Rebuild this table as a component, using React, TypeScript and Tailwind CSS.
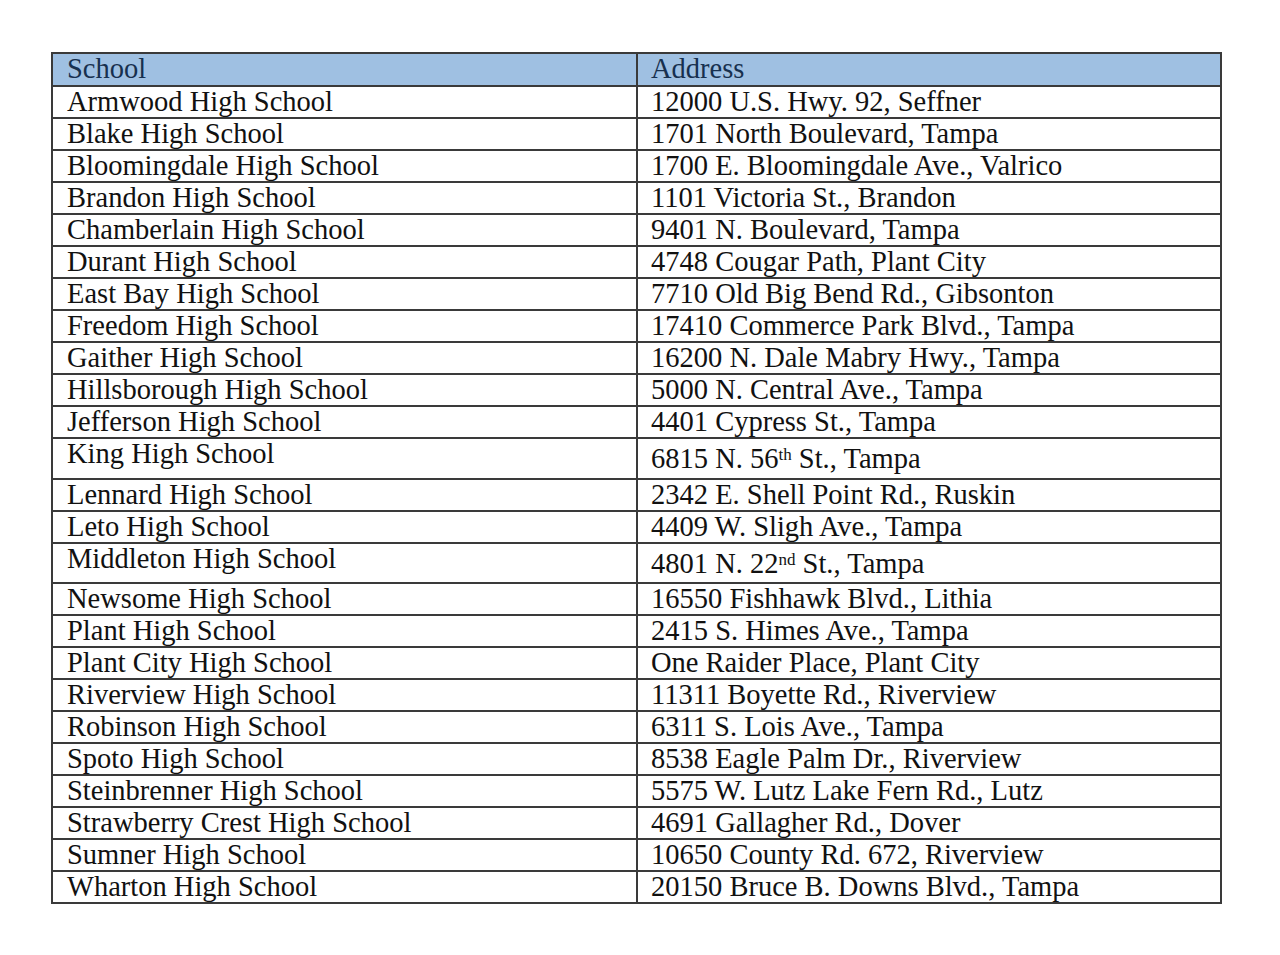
import React from 'react';

type Row = {
  school: string;
  address: React.ReactNode;
  tall?: string; // row height override for lines with superscripts
};

const rows: Row[] = [
  { school: 'Armwood High School', address: '12000 U.S. Hwy. 92, Seffner' },
  { school: 'Blake High School', address: '1701 North Boulevard, Tampa' },
  { school: 'Bloomingdale High School', address: '1700 E. Bloomingdale Ave., Valrico' },
  { school: 'Brandon High School', address: '1101 Victoria St., Brandon' },
  { school: 'Chamberlain High School', address: '9401 N. Boulevard, Tampa' },
  { school: 'Durant High School', address: '4748 Cougar Path, Plant City' },
  { school: 'East Bay High School', address: '7710 Old Big Bend Rd., Gibsonton' },
  { school: 'Freedom High School', address: '17410 Commerce Park Blvd., Tampa' },
  { school: 'Gaither High School', address: '16200 N. Dale Mabry Hwy., Tampa' },
  { school: 'Hillsborough High School', address: '5000 N. Central Ave., Tampa' },
  { school: 'Jefferson High School', address: '4401 Cypress St., Tampa' },
  {
    school: 'King High School',
    address: (
      <>
        6815 N. 56<sup className="text-[17px]">th</sup> St., Tampa
      </>
    ),
    tall: 'h-[41px]',
  },
  { school: 'Lennard High School', address: '2342 E. Shell Point Rd., Ruskin' },
  { school: 'Leto High School', address: '4409 W. Sligh Ave., Tampa' },
  {
    school: 'Middleton High School',
    address: (
      <>
        4801 N. 22<sup className="text-[17px]">nd</sup> St., Tampa
      </>
    ),
    tall: 'h-[40px]',
  },
  { school: 'Newsome High School', address: '16550 Fishhawk Blvd., Lithia' },
  { school: 'Plant High School', address: '2415 S. Himes Ave., Tampa' },
  { school: 'Plant City High School', address: 'One Raider Place, Plant City' },
  { school: 'Riverview High School', address: '11311 Boyette Rd., Riverview' },
  { school: 'Robinson High School', address: '6311 S. Lois Ave., Tampa' },
  { school: 'Spoto High School', address: '8538 Eagle Palm Dr., Riverview' },
  { school: 'Steinbrenner High School', address: '5575 W. Lutz Lake Fern Rd., Lutz' },
  { school: 'Strawberry Crest High School', address: '4691 Gallagher Rd., Dover' },
  { school: 'Sumner High School', address: '10650 County Rd. 672, Riverview' },
  { school: 'Wharton High School', address: '20150 Bruce B. Downs Blvd., Tampa' },
];

export default function App() {
  return (
    <div
      className="min-h-screen bg-white pt-[52px] pl-[51px] text-[28.5px] text-[#111111]"
      style={{ fontFamily: '"Liberation Serif", "Times New Roman", serif' }}
    >
      <div className="w-[1171px] border-2 border-[#3a3a3a]">
        {/* Header */}
        <div className="flex h-[31px] bg-[#9fc0e2] leading-[30px] text-[#17304f]">
          <div className="w-[583px] shrink-0 pl-[14px]">School</div>
          <div className="flex-1 border-l-2 border-[#3a3a3a] pl-[13px]">Address</div>
        </div>

        {rows.map((r) => (
          <div
            key={r.school}
            className={`flex border-t-2 border-[#3a3a3a] leading-[30px] ${r.tall ?? 'h-[32px]'}`}
          >
            <div className="w-[583px] shrink-0 whitespace-nowrap pl-[14px]">{r.school}</div>
            <div
              className={`flex-1 whitespace-nowrap border-l-2 border-[#3a3a3a] pl-[13px] ${
                r.tall ? 'pt-[5px]' : ''
              }`}
            >
              {r.address}
            </div>
          </div>
        ))}
      </div>
    </div>
  );
}
